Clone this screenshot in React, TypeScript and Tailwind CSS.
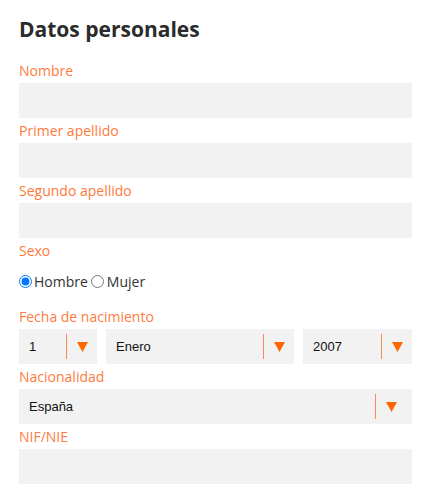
const labelCls =
  "block h-[25px] text-[14px] leading-[25px] text-[#ff7a3d] font-['Open_Sans',sans-serif]";

function TextField({ label }: { label: string }) {
  return (
    <div>
      <label className={labelCls}>{label}</label>
      <div className="h-[35px] w-full bg-[#f2f2f2]" />
    </div>
  );
}

function Arrow() {
  return (
    <svg width="11" height="10" viewBox="0 0 11 10" className="block">
      <path d="M0 0h11L5.5 10z" fill="#ff6600" />
    </svg>
  );
}

function SelectBox({
  value,
  className,
  wide,
}: {
  value: string;
  className: string;
  wide?: boolean;
}) {
  return (
    <div className={`flex h-[35px] items-center bg-[#f2f2f2] ${className}`}>
      <span className="flex-1 pl-[10px] text-[13px] text-[#111] font-['Liberation_Sans',Arial,sans-serif]">
        {value}
      </span>
      <div className="h-[25px] w-px bg-[#ff8a50]" />
      <div className={`flex justify-center ${wide ? "w-[36px] pr-[6px]" : "w-[30px]"}`}>
        <Arrow />
      </div>
    </div>
  );
}

export default function App() {
  return (
    <div className="min-h-screen bg-white font-['Open_Sans',sans-serif]">
      <div className="w-[393px] ml-[19px]">
        <h1 className="pt-[14px] h-[58px] text-[21px] font-bold leading-[30px] text-[#2b2b2b]">
          Datos personales
        </h1>

        <TextField label="Nombre" />
        <TextField label="Primer apellido" />
        <TextField label="Segundo apellido" />

        <div>
          <label className={labelCls}>Sexo</label>
          <div className="flex h-[36px] mb-[5px] items-center text-[14px] text-[#333]">
            <input
              type="radio"
              name="sexo"
              defaultChecked
              className="m-0 h-[13px] w-[13px] shrink-0"
            />
            <span className="ml-[2px]">Hombre</span>
            <input
              type="radio"
              name="sexo"
              className="m-0 ml-[3px] h-[13px] w-[13px] shrink-0"
            />
            <span className="ml-[3px]">Mujer</span>
          </div>
        </div>

        <div>
          <label className={labelCls}>Fecha de nacimiento</label>
          <div className="flex gap-[9px]">
            <SelectBox value="1" className="w-[78px]" />
            <SelectBox value="Enero" className="w-[188px]" />
            <SelectBox value="2007" className="flex-1" />
          </div>
        </div>

        <div>
          <label className={labelCls}>Nacionalidad</label>
          <SelectBox value="España" className="w-full" wide />
        </div>

        <TextField label="NIF/NIE" />
      </div>
    </div>
  );
}
